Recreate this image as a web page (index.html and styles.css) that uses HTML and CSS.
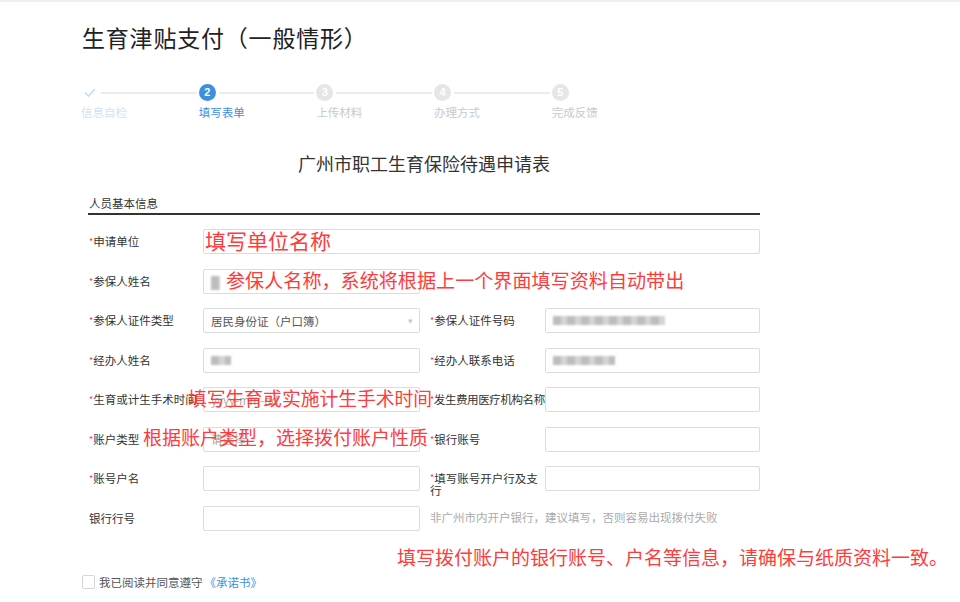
FILE: index.html
```html
<!DOCTYPE html>
<html lang="zh-CN">
	<head>
		<meta charset="utf-8">
		<link rel="stylesheet" href="styles.css">
	</head>

	<body>
		<div class="topbar"></div>
		<div class="page">
			<h1 class="title">生育津贴支付（一般情形）</h1>

			<div class="steps">
				<div class="step done">
					<div class="step-head">
						<span class="dot">
							<svg width="14" height="11" viewBox="0 0 14 11"><polyline points="2,5.5 5.5,9 12,2" fill="none" stroke="#c3dcf6" stroke-width="1.6"/></svg>
						</span>
						<span class="bar"></span>
					</div>
					<div class="step-name">信息自检</div>
				</div>
				<div class="step active">
					<div class="step-head"><span class="dot">2</span><span class="bar"></span></div>
					<div class="step-name">填写表单</div>
				</div>
				<div class="step">
					<div class="step-head"><span class="dot">3</span><span class="bar"></span></div>
					<div class="step-name">上传材料</div>
				</div>
				<div class="step">
					<div class="step-head"><span class="dot">4</span><span class="bar"></span></div>
					<div class="step-name">办理方式</div>
				</div>
				<div class="step last">
					<div class="step-head"><span class="dot">5</span></div>
					<div class="step-name">完成反馈</div>
				</div>
			</div>

			<div class="form">
				<h2 class="form-title">广州市职工生育保险待遇申请表</h2>
				<div class="section">人员基本信息</div>

				<div class="row">
					<label class="lbl"><i>*</i>申请单位</label>
					<div class="field wide"></div>
				</div>

				<div class="row">
					<label class="lbl"><i>*</i>参保人姓名</label>
					<div class="field"><span class="blur tall" style="width:9px"></span></div>
				</div>

				<div class="row">
					<label class="lbl"><i>*</i>参保人证件类型</label>
					<div class="field select"><span class="val">居民身份证（户口簿）</span><span class="arrow">&#9662;</span></div>
					<label class="lbl right"><i>*</i>参保人证件号码</label>
					<div class="field r"><span class="blur" style="width:112px"></span></div>
				</div>

				<div class="row">
					<label class="lbl"><i>*</i>经办人姓名</label>
					<div class="field"><span class="blur" style="width:20px"></span></div>
					<label class="lbl right"><i>*</i>经办人联系电话</label>
					<div class="field r"><span class="blur" style="width:62px"></span></div>
				</div>

				<div class="row">
					<label class="lbl"><i>*</i>生育或计生手术时间</label>
					<div class="field"><span class="ph">yyyy-mm-dd</span></div>
					<label class="lbl right tight"><i>*</i>发生费用医疗机构名称</label>
					<div class="field r"></div>
				</div>

				<div class="row">
					<label class="lbl"><i>*</i>账户类型</label>
					<div class="field select"><span class="ph">请选择</span></div>
					<label class="lbl right"><i>*</i>银行账号</label>
					<div class="field r"></div>
				</div>

				<div class="row">
					<label class="lbl"><i>*</i>账号户名</label>
					<div class="field"></div>
					<label class="lbl right wrap"><i>*</i>填写账号开户行及支行</label>
					<div class="field r"></div>
				</div>

				<div class="row">
					<label class="lbl">银行行号</label>
					<div class="field"></div>
					<span class="hint">非广州市内开户银行，建议填写，否则容易出现拨付失败</span>
				</div>
			</div>

			<div class="note bottom">填写拨付账户的银行账号、户名等信息，请确保与纸质资料一致。</div>

			<div class="agree">
				<span class="box"></span>
				<span>我已阅读并同意遵守</span>
				<a href="#" class="link">《承诺书》</a>
			</div>

			<div class="note n1">填写单位名称</div>
			<div class="note n2">参保人名称，系统将根据上一个界面填写资料自动带出</div>
			<div class="note n3">填写生育或实施计生手术时间</div>
			<div class="note n4">根据账户类型，选择拨付账户性质</div>
		</div>
	</body>
</html>
```

FILE: styles.css
```css
body {
	margin: 0;
	background: #fff;
	font-family: "Noto Sans CJK SC", "Noto Sans", sans-serif;
	color: #333;
}

.topbar {
	height: 2px;
	background-color: #eeeeee;
}

.page {
	position: relative;
	width: 960px;
	height: 600px;
	overflow: hidden;
}

.title {
	margin: 20px 0 0 82px;
	font-size: 23px;
	font-weight: normal;
	line-height: 30px;
	letter-spacing: 0.8px;
	color: #222;
}

/* steps */
.steps {
	display: flex;
	margin: 32px 0 0 81px;
}

.step {
	width: 117.7px;
}

.step-head {
	display: flex;
	align-items: center;
	height: 17px;
}

.dot {
	width: 17px;
	height: 17px;
	border-radius: 50%;
	background-color: #e6e6e6;
	color: #fff;
	font-size: 11px;
	font-weight: bold;
	line-height: 17px;
	text-align: center;
	font-family: "Liberation Sans", sans-serif;
	flex: none;
}

.bar {
	flex: 1;
	height: 2px;
	background-color: #ececec;
	margin: 0 2px 0 3px;
}

.step-name {
	margin-top: 3px;
	font-size: 11.5px;
	line-height: 16px;
	color: #c6c9cf;
}

.done .dot {
	background: none;
	display: flex;
	align-items: center;
	justify-content: center;
}

.done .step-name {
	color: #cfe2f7;
}

.active .dot {
	background-color: #3d8fe0;
}

.active .step-name {
	color: #3d8fe0;
}

/* form */
.form {
	margin-left: 88px;
	width: 672px;
}

.form-title {
	margin: 31px 0 0 0;
	font-size: 18px;
	font-weight: normal;
	line-height: 24px;
	text-align: center;
	color: #333;
}

.section {
	margin-top: 20px;
	padding: 0 0 2px 1px;
	font-size: 11.5px;
	line-height: 16px;
	border-bottom: 2px solid #333;
	margin-bottom: 14px;
}

.row {
	display: flex;
	align-items: flex-start;
	height: 25px;
	margin-bottom: 14.5px;
}

.lbl {
	width: 114px;
	padding: 6px 0 0 1px;
	font-size: 11.5px;
	line-height: 13px;
	color: #333;
	flex: none;
}

.lbl i {
	font-style: normal;
	color: #f03c3c;
	font-size: 9px;
	vertical-align: top;
}

.lbl.right {
	width: 115px;
	margin-left: 10px;
	padding-left: 0;
}

.lbl.tight {
	white-space: nowrap;
	letter-spacing: -0.4px;
}

.lbl.wrap {
	width: 112px;
	padding-right: 3px;
	line-height: 12px;
}

.field {
	position: relative;
	box-sizing: border-box;
	width: 217px;
	height: 25px;
	border: 1px solid #dcdcdc;
	border-radius: 2px;
	flex: none;
	display: flex;
	align-items: center;
	padding-left: 7px;
}

.field.wide {
	width: 557px;
}

.field.r {
	width: 215px;
}

.val {
	font-size: 11.5px;
	color: #555;
}

.ph {
	font-size: 11.5px;
	color: #aaa;
}

.arrow {
	position: absolute;
	right: 6px;
	top: 5px;
	font-size: 9px;
	color: #c8c8c8;
}

.blur {
	height: 9px;
	background: repeating-linear-gradient(90deg, #bdbdbd 0 8px, #d4d4d4 8px 14px);
	filter: blur(1.2px);
}

.blur.tall {
	height: 14px;
	margin-top: 4px;
}

.hint {
	margin-left: 10px;
	padding-top: 3px;
	font-size: 11.5px;
	line-height: 16px;
	color: #aaa;
}

/* red notes */
.note {
	color: #ff3b3b;
	line-height: 24px;
	white-space: nowrap;
}

.note.bottom {
	margin: 7px 0 0 397px;
	font-size: 19px;
}

.n1 {
	position: absolute;
	left: 205px;
	top: 226px;
	font-size: 21px;
}

.n2 {
	position: absolute;
	left: 226px;
	top: 266px;
	font-size: 19.1px;
}

.n3 {
	position: absolute;
	left: 188px;
	top: 384px;
	font-size: 18.8px;
}

.n4 {
	position: absolute;
	left: 143px;
	top: 423px;
	font-size: 19px;
}

/* agree */
.agree {
	display: flex;
	align-items: center;
	margin: 5px 0 0 82px;
	font-size: 11.5px;
	line-height: 16px;
	color: #555;
}

.box {
	box-sizing: border-box;
	width: 13px;
	height: 14px;
	border: 1px solid #d6d6d6;
	border-radius: 2px;
	margin-right: 4px;
}

.link {
	color: #3d8fe0;
	text-decoration: none;
	margin-left: 2px;
}
```
